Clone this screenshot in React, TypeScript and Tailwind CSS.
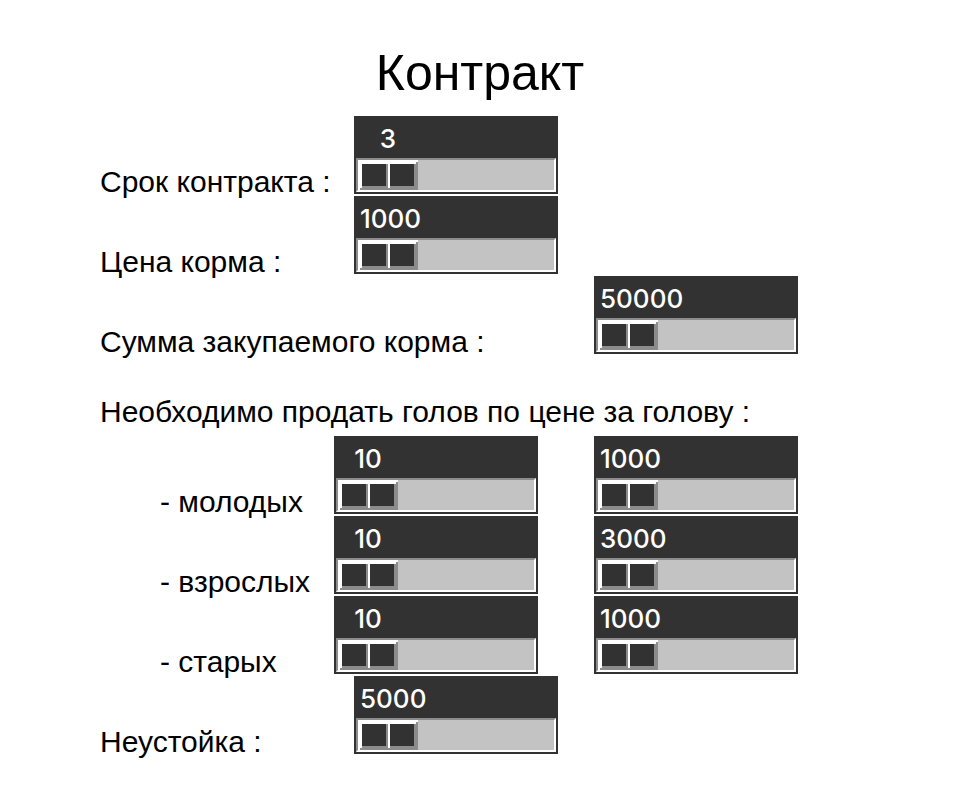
import { useId, useState } from "react";

type ScaleProps = { name: string; min: number; max: number; step?: number };

const TRACK_TRAVEL = 136;

/** Horizontal scale with its current value shown above the handle. */
function Scale({ name, min, max, step = 1, id }: ScaleProps & { id?: string }) {
  const [value, setValue] = useState(min);
  const shift = ((value - min) / (max - min)) * TRACK_TRAVEL;

  return (
    <div className="w-[204px] shrink-0 bg-[#323232] p-0.5">
      <div className="flex h-10 overflow-hidden pt-[5px] pl-1">
        <output
          className="min-w-14 shrink-0 text-center font-[Inter,sans-serif] text-[26px] leading-8 font-medium text-white"
          style={{ marginLeft: shift }}
        >
          {value}
        </output>
      </div>
      <input
        id={id}
        type="range"
        aria-label={id ? undefined : name}
        name={name}
        min={min}
        max={max}
        step={step}
        value={value}
        onChange={(e) => setValue(Number(e.target.value))}
        className="m-0 block h-[34px] w-full appearance-none border-2 border-t-[#8c8c8c] border-r-white border-b-white border-l-[#8c8c8c] bg-[#c3c3c3] [&::-webkit-slider-thumb]:h-[30px] [&::-webkit-slider-thumb]:w-[60px] [&::-webkit-slider-thumb]:appearance-none [&::-webkit-slider-thumb]:rounded-none [&::-webkit-slider-thumb]:border-0 [&::-webkit-slider-thumb]:[background:linear-gradient(#fff,#fff)_30px_0/2px_28px_no-repeat,linear-gradient(#323232,#323232)_4px_4px/24px_22px_no-repeat,linear-gradient(#323232,#323232)_32px_4px/24px_22px_no-repeat,#8c8c8c] [&::-webkit-slider-thumb]:[box-shadow:inset_2px_2px_0_#fff,inset_-2px_-2px_0_#8c8c8c,inset_4px_4px_0_#fff]"
      />
    </div>
  );
}

function Field({ label, wide = false, ...scale }: ScaleProps & { label: string; wide?: boolean }) {
  const id = useId();
  return (
    <div className="flex h-20 items-start">
      <label htmlFor={id} className={`shrink-0 self-end ${wide ? "w-[494px]" : "w-[254px]"}`}>
        {label}
      </label>
      <Scale id={id} {...scale} />
    </div>
  );
}

function HeadsRow({ label, name, price }: { label: string; name: string; price: number }) {
  const id = useId();
  return (
    <div className="flex h-20 items-start pl-[60px]">
      <label htmlFor={id} className="w-[174px] shrink-0 self-end">
        {label}
      </label>
      <div className="flex gap-14">
        <Scale id={id} name={`${name}-count`} min={10} max={100} />
        <Scale name={`${name}-price`} min={price} max={price * 10} step={100} />
      </div>
    </div>
  );
}

export default function App() {
  return (
    <main className="min-h-screen bg-white pt-11 font-['Liberation_Sans',Arial,sans-serif] text-black">
      <h1 className="mb-3.5 text-center text-[50px] leading-[58px]">Контракт</h1>
      <form className="pl-[100px] text-[30px] leading-7 whitespace-nowrap">
        <Field label="Срок контракта :" name="term" min={3} max={10} />
        <Field label="Цена корма :" name="feed-price" min={1000} max={10000} step={100} />
        <Field label="Сумма закупаемого корма :" name="feed-total" min={50000} max={500000} step={1000} wide />
        <fieldset>
          <legend className="flex h-20 items-end pb-2.5">
            Необходимо продать голов по цене за голову :
          </legend>
          <HeadsRow label="- молодых" name="young" price={1000} />
          <HeadsRow label="- взрослых" name="adult" price={3000} />
          <HeadsRow label="- старых" name="old" price={1000} />
        </fieldset>
        <Field label="Неустойка :" name="penalty" min={5000} max={50000} step={500} />
      </form>
    </main>
  );
}
